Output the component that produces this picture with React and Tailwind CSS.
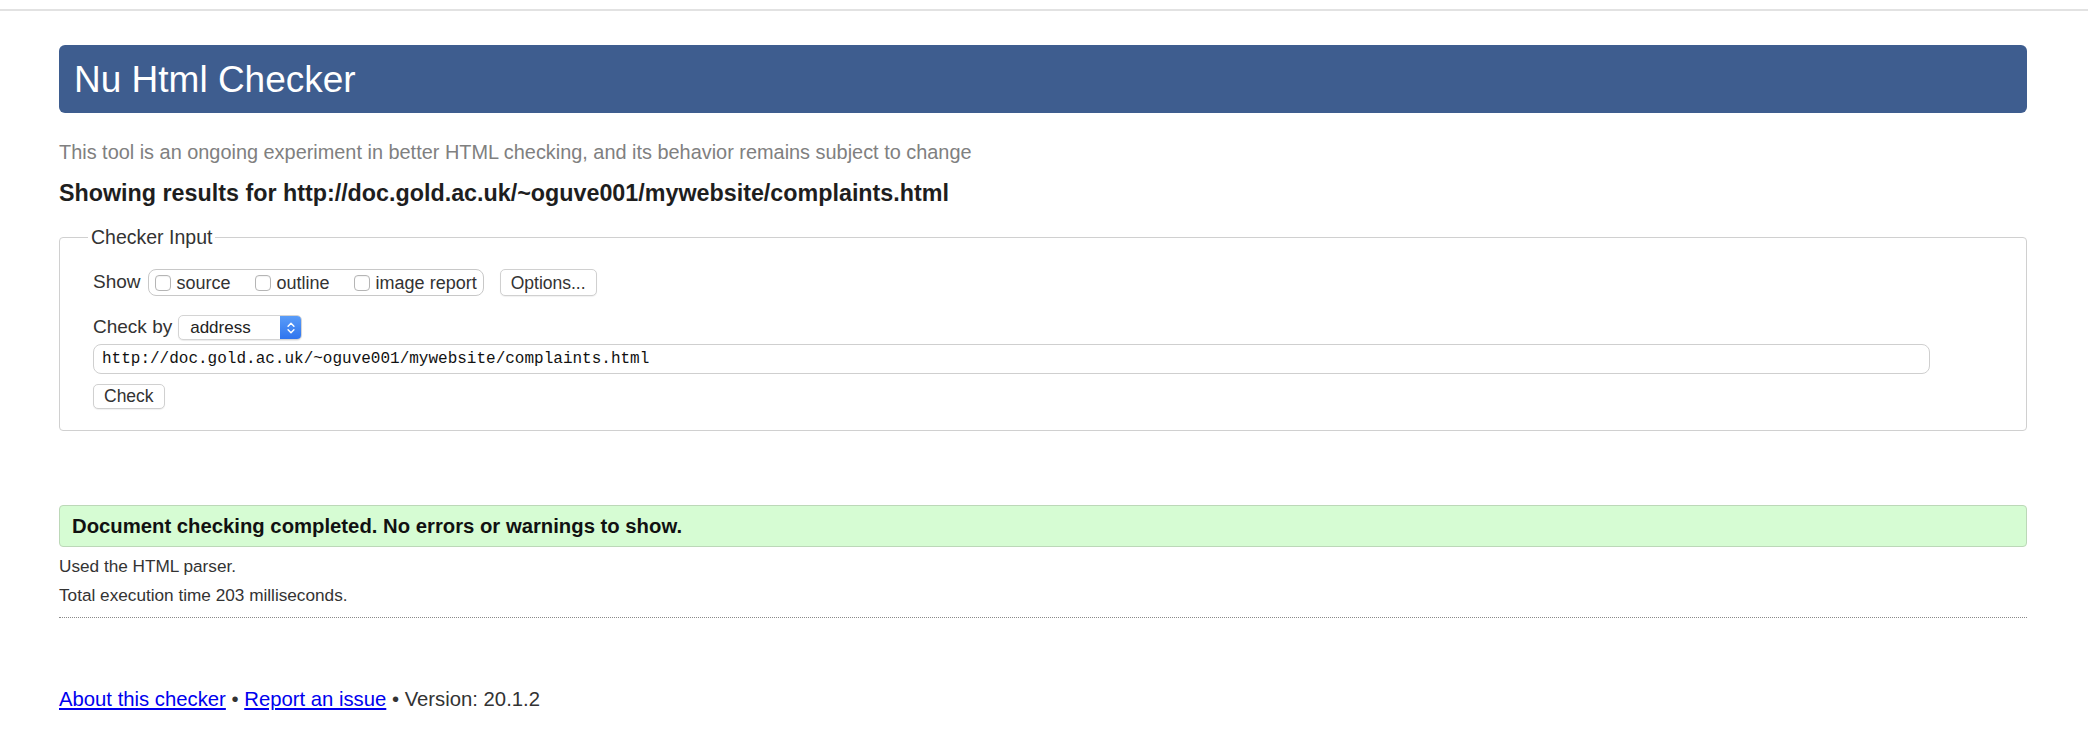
import { ChevronsUpDown } from "lucide-react";

const SHOW_OPTIONS = [
  { label: "source", gap: "mr-[24px]" },
  { label: "outline", gap: "mr-[24px]" },
  { label: "image report", gap: "" },
];

function Checkbox() {
  return (
    <span className="inline-block w-[16px] h-[16px] rounded-[4px] border border-[#b5b5b5] bg-white shadow-[inset_0_1px_1px_rgba(0,0,0,0.05)]" />
  );
}

export default function App() {
  return (
    <div className="min-h-screen bg-white font-['Liberation_Sans',Arial,sans-serif] text-[#222]">
      <div className="pt-[9px]">
        <div className="h-[2px] bg-[#e2e2e2]" />
      </div>

      <main className="pl-[59px] pr-[61px]">
        <header className="mt-[34px] h-[68px] rounded-[6px] bg-[#3e5d8f] flex items-center pl-[15px]">
          <h1 className="text-[37px] leading-none text-white">Nu Html Checker</h1>
        </header>

        <p className="mt-[29px] text-[19.9px] leading-[20px] text-[#808080]">
          This tool is an ongoing experiment in better HTML checking, and its behavior remains subject to change
        </p>

        <h2 className="mt-[19px] text-[23.3px] leading-[24px] font-bold text-[#1e1e1e]">
          Showing results for http://doc.gold.ac.uk/~oguve001/mywebsite/complaints.html
        </h2>

        <fieldset className="mt-[21px] border border-[#d0d0d0] rounded-[4px] pl-[33px] pr-[96px] pt-[21px] pb-[21px]">
          <legend className="-ml-[5px] px-[3px] text-[19.5px] leading-[22px] text-[#333]">Checker Input</legend>

          <div className="flex items-center h-[27px]">
            <span className="text-[19px] text-[#333] mr-[7px]">Show</span>
            <div className="flex items-center h-[27px] rounded-[8px] border border-[#c8c8c8] pl-[6px] pr-[6px]">
              {SHOW_OPTIONS.map(({ label, gap }) => (
                <label key={label} className={`flex items-center ${gap}`}>
                  <Checkbox />
                  <span className="ml-[6px] text-[18px] leading-none text-[#333]">{label}</span>
                </label>
              ))}
            </div>
            <button className="ml-[16px] h-[27px] px-[10px] rounded-[5px] border border-[#d0d0d0] bg-white text-[17.5px] text-[#333] shadow-[0_1px_1px_rgba(0,0,0,0.06)]">
              Options...
            </button>
          </div>

          <div className="mt-[19px] flex items-center h-[25px]">
            <span className="text-[19px] text-[#333] mr-[6px]">Check by</span>
            <div className="flex h-[25px] w-[124px] rounded-[5px] border border-[#d4d4d4] bg-white overflow-hidden shadow-[0_1px_1px_rgba(0,0,0,0.08)]">
              <span className="flex-1 pl-[11px] text-[17px] leading-[23px] text-[#222]">address</span>
              <span className="w-[21px] flex items-center justify-center bg-gradient-to-b from-[#5a9cf8] to-[#2f74ee]">
                <ChevronsUpDown size={14} color="white" strokeWidth={2.5} />
              </span>
            </div>
          </div>

          <div className="mt-[4px] h-[30px] rounded-[8px] border border-[#cfcfcf] flex items-center pl-[8px] font-['Liberation_Mono',monospace] text-[16px] text-[#111]">
            http://doc.gold.ac.uk/~oguve001/mywebsite/complaints.html
          </div>

          <button className="mt-[10px] h-[25px] px-[10px] rounded-[5px] border border-[#d0d0d0] bg-white text-[17.5px] leading-none text-[#333] shadow-[0_1px_1px_rgba(0,0,0,0.06)]">
            Check
          </button>
        </fieldset>

        <div className="mt-[74px] h-[42px] rounded-[4px] border border-[#bcd8b8] bg-[#d6fcd3] flex items-center pl-[12px]">
          <p className="text-[20.3px] font-bold text-[#111]">
            Document checking completed. No errors or warnings to show.
          </p>
        </div>

        <p className="mt-[9px] text-[17.2px] leading-[20px] text-[#333]">Used the HTML parser.</p>
        <p className="mt-[9px] text-[17.2px] leading-[20px] text-[#333]">Total execution time 203 milliseconds.</p>

        <div className="mt-[12px] border-t border-dotted border-[#8a8a8a]" />

        <footer className="mt-[70px] text-[20.3px] leading-[23px] text-[#333]">
          <a href="#about" className="text-[#0000ee] underline">About this checker</a>
          {" • "}
          <a href="#report" className="text-[#0000ee] underline">Report an issue</a>
          {" • Version: 20.1.2"}
        </footer>
      </main>
    </div>
  );
}
